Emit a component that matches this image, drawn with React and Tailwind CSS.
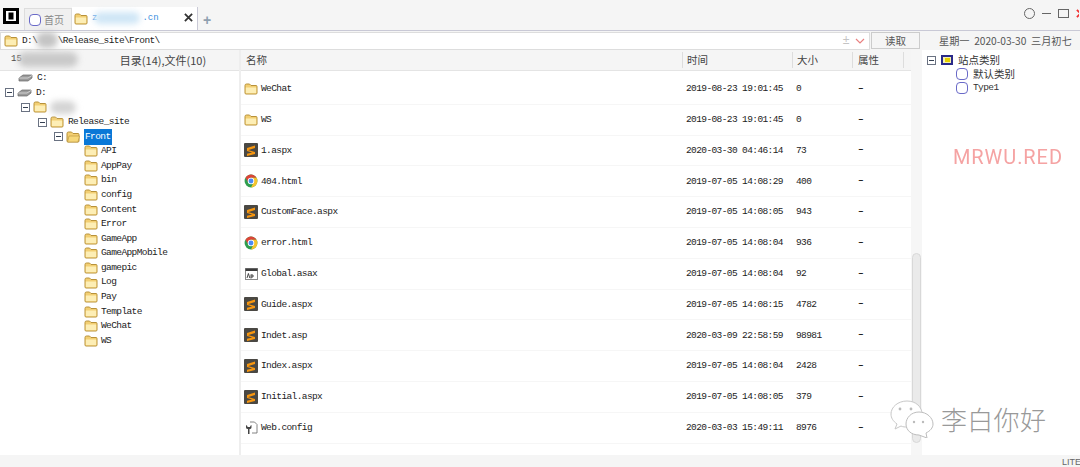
import React from "react";

const mono = { fontFamily: '"Liberation Mono", monospace' };

const treeItems = ["API", "AppPay", "bin", "config", "Content", "Error", "GameApp", "GameAppMobile", "gamepic", "Log", "Pay", "Template", "WeChat", "WS"];

const files = [
  ["folder", "WeChat", "2019-08-23 19:01:45", "0"],
  ["folder", "WS", "2019-08-23 19:01:45", "0"],
  ["sublime", "1.aspx", "2020-03-30 04:46:14", "73"],
  ["chrome", "404.html", "2019-07-05 14:08:29", "400"],
  ["sublime", "CustomFace.aspx", "2019-07-05 14:08:05", "943"],
  ["chrome", "error.html", "2019-07-05 14:08:04", "936"],
  ["asax", "Global.asax", "2019-07-05 14:08:04", "92"],
  ["sublime", "Guide.aspx", "2019-07-05 14:08:15", "4782"],
  ["sublime", "Indet.asp", "2020-03-09 22:58:59", "98981"],
  ["sublime", "Index.aspx", "2019-07-05 14:08:04", "2428"],
  ["sublime", "Initial.aspx", "2019-07-05 14:08:05", "379"],
  ["config", "Web.config", "2020-03-03 15:49:11", "8976"],
];

const FolderIcon = ({ open }) => (
  <svg width="14" height="12" viewBox="0 0 14 12" className="shrink-0">
    <path d="M1 2.5 Q1 1 2.5 1 H5.5 L7 2.5 H12 Q13 2.5 13 3.5 V10 Q13 11 12 11 H2 Q1 11 1 10 Z" fill="#f3cf73" stroke="#b8923a" />
    <path d={open ? "M3 5 H13.5 L12 11 H1.5 Z" : "M1.8 4.5 H12.2 V10.2 H1.8 Z"} fill={open ? "#f6d77a" : "#fdeeb5"} stroke={open ? "#b8923a" : "none"} strokeWidth="0.6" />
  </svg>
);

const DriveIcon = () => (
  <svg width="15" height="8" viewBox="0 0 15 8" className="shrink-0">
    <path d="M1 4 L5 1 H14 L14 4 L10 7 H1 Z" fill="#9a9a9a" stroke="#666" strokeWidth="0.7" />
    <path d="M1 4 H10 L14 1.5" fill="none" stroke="#dedede" strokeWidth="0.8" />
  </svg>
);

const Toggle = () => (
  <span className="flex h-[9px] w-[9px] shrink-0 items-center justify-center border border-gray-500 bg-white">
    <span className="h-px w-[5px] bg-gray-700" />
  </span>
);

const SublimeIcon = () => (
  <svg width="14" height="14" viewBox="0 0 14 14" className="shrink-0">
    <rect x="0" y="0" width="14" height="14" rx="1" fill="#4a4843" />
    <path d="M3 5 L11 2.6 V5 L3 7.4 Z M3 6.8 L11 9 V11 L3 13 V10.8 L8.2 9.4 L3 8 Z" fill="#f7960f" />
  </svg>
);

const ChromeIcon = () => (
  <svg width="14" height="14" viewBox="0 0 24 24" className="shrink-0">
    <circle cx="12" cy="12" r="11" fill="#2f9e4f" />
    <path d="M2.5 6.5 A11 11 0 0 1 21.5 6.5 H12 L7.67 14.5 Z" fill="#dc4437" />
    <path d="M21.5 6.5 A11 11 0 0 1 12 23 L16.33 14.5 L12 6.5 Z" fill="#f5c32c" />
    <circle cx="12" cy="12" r="5.6" fill="#fff" />
    <circle cx="12" cy="12" r="4.2" fill="#4a8af4" />
  </svg>
);

const AsaxIcon = () => (
  <svg width="13" height="12" viewBox="0 0 13 12" className="shrink-0">
    <rect x="0.5" y="0.5" width="12" height="11" fill="#fff" stroke="#8a8a8a" />
    <rect x="0.5" y="0.5" width="12" height="2.5" fill="#3c3c3c" />
    <path d="M2 10 L3.4 5.5 L4.8 10 M6 6.5 V10.5 M6 7 H8 V9 H6" fill="none" stroke="#333" strokeWidth="0.9" />
  </svg>
);

const ConfigIcon = () => (
  <svg width="13" height="14" viewBox="0 0 13 14" className="shrink-0">
    <path d="M5 1 H9.5 L12 3.5 V12 H7" fill="#fff" stroke="#666" strokeWidth="0.8" />
    <path d="M1 4 V6.5 Q1 8 3 8 V13 H4.5 V8 Q6.5 8 6.5 6.5 V4 L5.2 5 V6 H2.4 V5 Z" fill="#444" />
  </svg>
);

const RingIcon = () => (
  <span className="h-[12px] w-[12px] shrink-0 rounded-[4px] border border-[#6a6ac8] bg-white" />
);

const AppLogo = () => (
  <svg width="16" height="16" viewBox="0 0 16 16" className="shrink-0">
    <rect width="16" height="16" fill="#000" />
    <rect x="3" y="3" width="10" height="10" fill="#fff" />
    <rect x="5.5" y="4.5" width="5" height="7" fill="#000" />
  </svg>
);

const CrossIcon = ({ size, color, width }) => (
  <svg width={size} height={size} viewBox="0 0 10 10" className="shrink-0">
    <path d="M1 1 L9 9 M9 1 L1 9" stroke={color} strokeWidth={width} fill="none" />
  </svg>
);

const fileIcons = {
  folder: <FolderIcon />,
  sublime: <SublimeIcon />,
  chrome: <ChromeIcon />,
  asax: <AsaxIcon />,
  config: <ConfigIcon />,
};

const Blur = ({ className }) => (
  <span className={`pointer-events-none absolute rounded-full blur-[3px] ${className}`} />
);

const TreeRow = ({ indent, children }) => (
  <div className={`flex h-[14.6px] items-center gap-[3px] text-[9.5px] tracking-[-0.6px] text-[#222] ${indent}`} style={mono}>
    {children}
  </div>
);

const WeChatMark = () => (
  <div className="pointer-events-none absolute bottom-[29px] left-[890px] flex items-center gap-[7px]">
    <svg width="44" height="38" viewBox="0 0 44 38">
      <path d="M17 1 C8 1 1 7 1 14 C1 18 3 21 7 24 L5 29 L11 26 C13 27 15 27 17 27 C27 27 32 21 32 14 C32 7 26 1 17 1 Z" fill="#fff" stroke="#c8c8c8" />
      <path d="M29 12 C21 12 16 18 16 24 C16 30 21 35 29 35 L37 38 L36 33 C40 31 43 28 43 24 C43 18 37 12 29 12 Z" fill="#fff" stroke="#bdbdbd" />
      <circle cx="10" cy="9" r="1.4" fill="#bbb" />
      <circle cx="21" cy="9" r="1.4" fill="#bbb" />
      <circle cx="24" cy="22" r="1.2" fill="#bbb" />
      <circle cx="33" cy="22" r="1.2" fill="#bbb" />
    </svg>
    <span className="text-[26px] font-light tracking-[0.3px] text-[#999]" style={{ fontFamily: '"Noto Sans CJK SC", sans-serif' }}>
      李白你好
    </span>
  </div>
);

export default function App() {
  return (
    <div
      className="relative flex h-[467px] w-[1080px] flex-col overflow-hidden bg-[#f5f5f5] text-[#444]"
      style={{ fontFamily: '"Noto Sans CJK SC", "Liberation Sans", sans-serif' }}
    >
      {/* tab bar */}
      <div className="flex h-[31px] shrink-0 items-end border-b border-[#c9c9d6] pl-[3px]">
        <div className="mb-[6px] self-end">
          <AppLogo />
        </div>
        <div className="ml-[5px] flex h-[22px] w-[48px] items-center gap-[3px] border border-b-0 border-[#ddd] bg-[#f0f0f0] pl-[4px] text-[10px] text-[#888]">
          <RingIcon />
          首页
        </div>
        <div className="relative flex h-[23px] w-[126px] items-center gap-1 border-r border-[#c9c9d6] bg-white pl-[2px] text-[9px] text-[#3b8fe0]" style={mono}>
          <FolderIcon />
          <span>z</span>
          <span className="ml-[41px]">.cn</span>
          <span className="absolute right-[4px] top-[6px]">
            <CrossIcon size={9} color="#333" width={2} />
          </span>
          <Blur className="left-[22px] top-[5px] h-3 w-[46px] bg-[#cfe6f6]" />
        </div>
        <span className="mb-[3px] ml-[5px] text-[14px] font-bold leading-none text-[#8fa0b0]" style={{ fontFamily: '"Liberation Sans", sans-serif' }}>+</span>
        <div className="mb-[11px] ml-auto flex items-center gap-[7px] self-end">
          <span className="h-[11px] w-[11px] rounded-full border border-[#666]" />
          <span className="h-px w-[9px] bg-[#666]" />
          <span className="h-[9px] w-[11px] border border-[#666]" />
          <span className="mr-[1px] w-[3px] overflow-hidden">
            <CrossIcon size={9} color="#f03030" width={2} />
          </span>
        </div>
      </div>

      {/* address row */}
      <div className="relative flex h-[19px] shrink-0 items-center">
        <div className="flex h-[18px] w-[870px] items-center gap-[4px] border border-[#ddd] bg-white pl-[3px] text-[9.5px] tracking-[-0.6px] text-[#222]" style={mono}>
          <FolderIcon />
          <span className="whitespace-pre pt-[1px]">D:\    \Release_site\Front\</span>
          <span className="ml-auto mr-[4px] flex items-center gap-[6px]">
            <span className="text-[12px] leading-none text-[#c4c4c4]">±</span>
            <svg width="10" height="6" viewBox="0 0 10 6">
              <path d="M1 1 L5 5 L9 1" fill="none" stroke="#e98080" strokeWidth="1.2" />
            </svg>
          </span>
        </div>
        <div className="ml-[1px] flex h-[17px] w-[49px] items-center justify-center border border-[#ccc] text-[10.5px] text-[#555]">读取</div>
        <div className="ml-[6px] flex flex-1 items-center whitespace-nowrap pl-[13px] text-[10.2px] text-[#555]">
          星期一&nbsp;&nbsp;2020-03-30&nbsp;&nbsp;三月初七
        </div>
        <Blur className="left-[36px] top-[1px] h-[16px] w-[22px] bg-[#c4c4c4]" />
      </div>

      {/* panels */}
      <div className="flex min-h-0 flex-1">
        <div className="flex w-[241px] shrink-0 flex-col border-r-2 border-[#eee]">
          <div className="relative flex h-[21px] shrink-0 items-center border-b border-[#e4e4e4] text-[11px]">
            <span className="ml-[11px] text-[9px]" style={mono}>15</span>
            <span className="ml-[98px]">目录(14),文件(10)</span>
            <Blur className="left-[18px] top-[2px] h-[15px] w-[60px] bg-[#c9c9c9]" />
          </div>
          <div className="relative flex-1 bg-white">
            <TreeRow indent="pl-[18px]"><DriveIcon /><span className="ml-[1px]">C:</span></TreeRow>
            <TreeRow indent="pl-[5px]"><Toggle /><DriveIcon /><span className="ml-[1px]">D:</span></TreeRow>
            <TreeRow indent="pl-[21px]"><Toggle /><FolderIcon /></TreeRow>
            <TreeRow indent="pl-[38px]"><Toggle /><FolderIcon /><span className="ml-[1px]">Release_site</span></TreeRow>
            <TreeRow indent="pl-[54px]">
              <Toggle />
              <FolderIcon open />
              <span className="ml-[1px] bg-[#0a78d7] p-px text-white">Front</span>
            </TreeRow>
            {treeItems.map((name) => (
              <TreeRow key={name} indent="pl-[84px]">
                <FolderIcon />
                <span>{name}</span>
              </TreeRow>
            ))}
            <Blur className="left-[50px] top-[30px] h-[13px] w-[26px] bg-[#d4d4d4]" />
          </div>
        </div>

        <div className="flex w-[670px] shrink-0 flex-col">
          <div className="flex h-[21px] shrink-0 items-center border-b border-[#e4e4e4] text-[10.5px]">
            <span className="w-[441px] pl-[5px]">名称</span>
            <span className="w-[110px] border-l border-[#ddd] pl-[4px]">时间</span>
            <span className="w-[60px] border-l border-[#ddd] pl-[4px]">大小</span>
            <span className="w-[52px] border-x border-[#ddd] pl-[5px]">属性</span>
          </div>
          <div className="flex-1 overflow-hidden bg-white pt-[3px] text-[9.5px] tracking-[-0.6px] text-[#222]" style={mono}>
            {files.map(([icon, name, time, size]) => (
              <div key={name} className="flex h-[30.8px] items-center border-b border-[#f6f6f6]">
                <span className="flex w-[441px] items-center gap-[3px] pl-[3px]">
                  <span className="flex w-[14px] justify-center">{fileIcons[icon]}</span>
                  <span className="pt-[1px]">{name}</span>
                </span>
                <span className="w-[110px] pl-[4px] pt-[1px]">{time}</span>
                <span className="w-[62px] pl-[4px] pt-[1px]">{size}</span>
                <span className="pl-[4px] font-bold">–</span>
              </div>
            ))}
          </div>
        </div>

        <div className="flex w-[11px] shrink-0 flex-col bg-[#f6f6f6] pb-[12px] pl-[1px] pt-[203px]">
          <div className="h-[190px] w-[9px] rounded-full border border-[#d8d8d8] bg-[#eaeaea]" />
        </div>

        <div className="relative flex-1 bg-white pl-[5px] pt-[3px] text-[10.5px] text-[#333]">
          <div className="flex h-[14px] items-center gap-[5px]">
            <Toggle />
            <span className="flex h-[10px] w-[12px] items-center justify-center border-2 border-[#2a2a8a] bg-[#f4f0b0]">
              <span className="h-[4px] w-[5px] bg-[#e6d000]" />
            </span>
            站点类别
          </div>
          <div className="flex h-[14px] items-center gap-[5px] pl-[29px]">
            <RingIcon />
            默认类别
          </div>
          <div className="flex h-[14px] items-center gap-[5px] pl-[29px] text-[9.5px] tracking-[-0.6px]" style={mono}>
            <RingIcon />
            <span className="pt-[1px]">Type1</span>
          </div>
          <div className="absolute left-[31px] top-[97px] origin-left scale-x-[0.95] whitespace-nowrap text-[21px] leading-none tracking-[1px] text-[#f5a3a3]" style={{ fontFamily: "Roboto, sans-serif" }}>
            MRWU.RED
          </div>
        </div>
      </div>

      {/* status bar */}
      <div className="flex h-[12px] shrink-0 items-center justify-end text-[9px] text-[#666]" style={{ fontFamily: '"Liberation Sans", sans-serif' }}>
        <span className="w-[18px] overflow-hidden whitespace-nowrap pt-[3px]">LITE</span>
      </div>

      <WeChatMark />
    </div>
  );
}
